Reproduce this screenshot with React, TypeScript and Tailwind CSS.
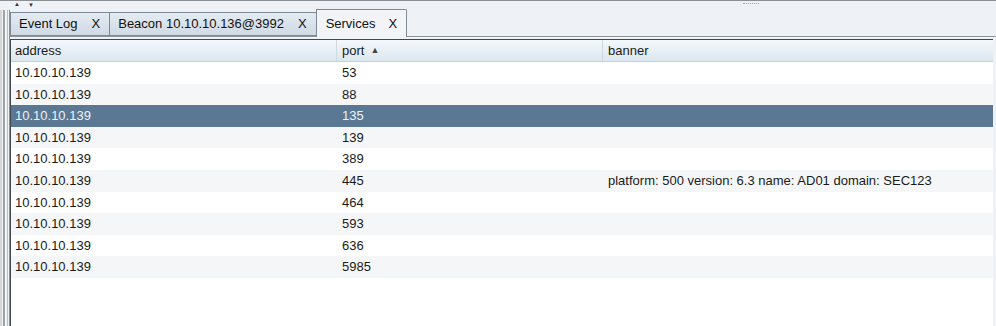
import React from 'react';

interface Service {
  address: string;
  port: string;
  banner: string;
}

const services: Service[] = [
  { address: '10.10.10.139', port: '53', banner: '' },
  { address: '10.10.10.139', port: '88', banner: '' },
  { address: '10.10.10.139', port: '135', banner: '' },
  { address: '10.10.10.139', port: '139', banner: '' },
  { address: '10.10.10.139', port: '389', banner: '' },
  { address: '10.10.10.139', port: '445', banner: 'platform: 500 version: 6.3 name: AD01 domain: SEC123' },
  { address: '10.10.10.139', port: '464', banner: '' },
  { address: '10.10.10.139', port: '593', banner: '' },
  { address: '10.10.10.139', port: '636', banner: '' },
  { address: '10.10.10.139', port: '5985', banner: '' },
];

const SELECTED = 2;

const Tab = ({ label, active }: { label: string; active?: boolean }) => (
  <div
    className={
      active
        ? 'flex items-start h-[28px] pt-[4px] pl-[9px] pr-[9px] gap-[13px] border border-b-0 border-[#7d8a96] rounded-tr-[2px] bg-[#f2f4f7] text-[#111] -mb-px z-10'
        : 'flex items-center h-[24px] pl-[8px] pr-[9px] gap-[14px] border border-[#7d8a96] border-r-0 first:border-l bg-gradient-to-b from-[#e4ebf2] to-[#cfdae5] text-[#111]'
    }
  >
    <span>{label}</span>
    <span>X</span>
  </div>
);

export default function App() {
  return (
    <div className="w-[996px] h-[326px] bg-[#eef1f5] flex flex-col overflow-hidden font-['Liberation_Sans',Arial,sans-serif] text-[13px] text-[#1a1a1a]">
      {/* split pane divider */}
      <div className="relative h-[10px] border-t border-[#8a8f94] bg-[#eef1f5] shrink-0">
        <span className="absolute left-[14px] top-[0px] text-[6px] leading-none text-[#333]">▲</span>
        <span className="absolute left-[28px] top-[1px] text-[6px] leading-none text-[#333]">▼</span>
        <span className="absolute left-[743px] top-[2px] w-[16px] h-[2px] border-t border-dotted border-[#9aa4ad]" />
      </div>

      <div className="flex flex-1 min-h-0">
        {/* left pane edge */}
        <div className="flex h-full shrink-0">
          <div className="w-[2px] bg-[#d4d6d8]" />
          <div className="w-[1px] bg-[#eef0f2]" />
          <div className="w-[2px] bg-[#9ea3a8]" />
          <div className="w-[2px] bg-[#f4f5f6]" />
          <div className="w-[1px] bg-[#b9bec3]" />
          <div className="w-[1px] bg-[#f0f2f4]" />
          <div className="w-[1px] bg-[#8a9096]" />
        </div>

        {/* tabbed content */}
        <div className="flex flex-col flex-1 min-w-0">
          <div className="flex items-end h-[27px] shrink-0 pl-0 border-b border-[#8d949a]">
            <Tab label="Event Log" />
            <Tab label="Beacon 10.10.10.136@3992" />
            <Tab label="Services" active />
          </div>
          <div className="h-[2px] bg-[#f2f4f7] shrink-0" />

          {/* table */}
          <div className="flex flex-col flex-1 bg-white border-t border-l border-[#3e4a50] mr-[3px]">
            <div className="flex h-[22px] shrink-0 bg-gradient-to-b from-[#f3f8fc] to-[#dde7ef] border-b border-[#c3d3db] text-[#1a1a1a]">
              <div className="w-[326px] pl-[4px] flex items-center border-r border-[#cfd9e0]">address</div>
              <div className="w-[266px] pl-[5px] flex items-center gap-[6px] border-r border-[#cfd9e0]">
                port
                <span className="text-[9px] text-[#444]">▲</span>
              </div>
              <div className="flex-1 pl-[5px] flex items-center">banner</div>
            </div>
            {services.map((s, i) => (
              <div
                key={i}
                className={
                  i === SELECTED
                    ? 'flex h-[21.6px] shrink-0 items-center bg-[#5a7893] text-[#eef2f5]'
                    : i % 2 === 0
                      ? 'flex h-[21.6px] shrink-0 items-center bg-white'
                      : 'flex h-[21.6px] shrink-0 items-center bg-[#f5f6f7]'
                }
              >
                <div className="w-[326px] pl-[4px]">{s.address}</div>
                <div className="w-[266px] pl-[5px]">{s.port}</div>
                <div className="flex-1 pl-[5px] whitespace-nowrap">{s.banner}</div>
              </div>
            ))}
          </div>
        </div>
      </div>
    </div>
  );
}
